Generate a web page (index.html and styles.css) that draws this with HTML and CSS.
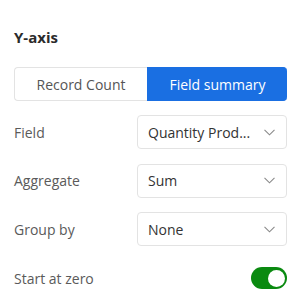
FILE: index.html
```html
<!DOCTYPE html>
<html lang="en">

<head>
	<meta charset="UTF-8">
	<meta name="viewport" content="width=device-width, initial-scale=1.0">
	<title>Y-axis settings</title>
	<link rel="stylesheet" href="styles.css">
</head>

<body>
	<div class="panel">
		<h2 class="panel-title">Y-axis</h2>

		<div class="segmented">
			<button class="seg-btn">Record Count</button>
			<button class="seg-btn active">Field summary</button>
		</div>

		<div class="rows">
			<div class="row">
				<span class="row-label">Field</span>
				<div class="select">
					<span class="select-value">Quantity Prod...</span>
					<svg class="chevron" width="11" height="7" viewBox="0 0 11 7">
						<path d="M0.5 0.8 L5.5 5.8 L10.5 0.8" fill="none" stroke="#8a8a8a" stroke-width="1.1"/>
					</svg>
				</div>
			</div>
			<div class="row">
				<span class="row-label">Aggregate</span>
				<div class="select">
					<span class="select-value">Sum</span>
					<svg class="chevron" width="11" height="7" viewBox="0 0 11 7">
						<path d="M0.5 0.8 L5.5 5.8 L10.5 0.8" fill="none" stroke="#8a8a8a" stroke-width="1.1"/>
					</svg>
				</div>
			</div>
			<div class="row">
				<span class="row-label">Group by</span>
				<div class="select">
					<span class="select-value">None</span>
					<svg class="chevron" width="11" height="7" viewBox="0 0 11 7">
						<path d="M0.5 0.8 L5.5 5.8 L10.5 0.8" fill="none" stroke="#8a8a8a" stroke-width="1.1"/>
					</svg>
				</div>
			</div>
		</div>

		<div class="toggle-row">
			<span class="row-label">Start at zero</span>
			<span class="toggle on"><span class="knob"></span></span>
		</div>
	</div>
</body>

</html>
```

FILE: styles.css
```css
body {
	margin: 0;
	background-color: #fff;
	font-family: 'Open Sans', sans-serif;
	color: #333;
}

.panel {
	width: 273px;
	padding: 26px 14px 0 14px;
}

.panel-title {
	margin: 0 0 19px 0;
	font-size: 15px;
	line-height: 22px;
	font-weight: 700;
	color: #2b2b2b;
}

.segmented {
	display: grid;
	grid-template-columns: 133px 1fr;
	height: 34px;
}

.seg-btn {
	font-family: 'Open Sans', sans-serif;
	font-size: 14px;
	border: 1px solid #e3e3e3;
	border-right: none;
	border-radius: 4px 0 0 4px;
	background-color: #fff;
	color: #555;
	padding: 0;
	cursor: pointer;
}

.seg-btn.active {
	background-color: #1a6fe2;
	border-color: #1a6fe2;
	color: #fff;
	border-radius: 0 4px 4px 0;
}

.rows {
	display: flex;
	flex-direction: column;
	gap: 14.5px;
	margin-top: 14px;
}

.row {
	display: grid;
	grid-template-columns: 123px 1fr;
	align-items: center;
}

.row-label {
	font-size: 14px;
	color: #5a5a5a;
}

.select {
	display: flex;
	align-items: center;
	justify-content: space-between;
	height: 34px;
	box-sizing: border-box;
	border: 1px solid #e3e3e3;
	border-radius: 4px;
	padding: 0 11px 0 10px;
	font-size: 14px;
	color: #333;
}

.toggle-row {
	display: flex;
	align-items: center;
	justify-content: space-between;
	margin-top: 20px;
	height: 24px;
}

.toggle {
	display: flex;
	align-items: center;
	justify-content: flex-end;
	width: 36px;
	height: 22px;
	box-sizing: border-box;
	padding: 0 2px;
	border-radius: 11px;
	background-color: #0a8a10;
}

.knob {
	width: 17px;
	height: 17px;
	border-radius: 50%;
	background-color: #fff;
}
```
